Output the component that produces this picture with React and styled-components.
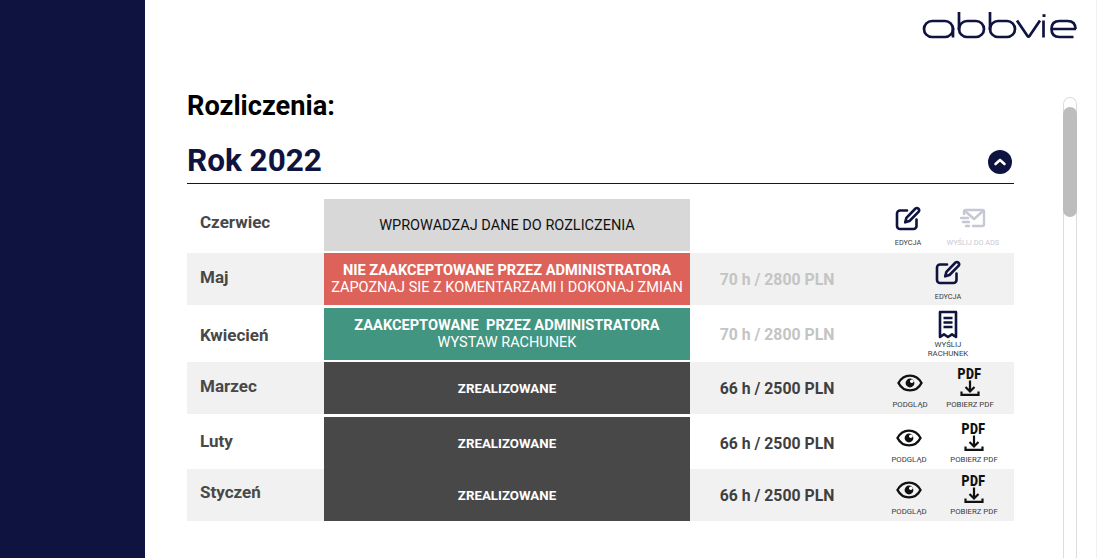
import React from 'react'
import styled, { createGlobalStyle } from 'styled-components'

const NAVY = '#0f1340'

const GlobalStyle = createGlobalStyle`
  html, body {
    margin: 0;
    height: 100%;
    background: #fff;
    font-family: Roboto, 'Liberation Sans', sans-serif;
    overflow: hidden;
  }
`

const Page = styled.div`
  display: flex;
  width: 1097px;
  height: 558px;
  overflow: hidden;
`

const Sidebar = styled.aside`
  width: 145px;
  flex: none;
  background: ${NAVY};
`

const Main = styled.main`
  flex: 1;
  display: flex;
  flex-direction: column;
  border-right: 1px solid #f1f1f1;
  min-width: 0;
`

const Header = styled.header`
  height: 97px;
  flex: none;
  display: flex;
  justify-content: flex-end;
  padding: 11px 18px 0 0;
  box-sizing: border-box;
`

const Body = styled.div`
  flex: 1;
  display: flex;
  padding-left: 42px;
  min-height: 0;
`

const Content = styled.section`
  width: 827px;
  flex: none;
`

const Title = styled.h1`
  margin: -7px 0 0;
  height: 32px;
  font-size: 27.2px;
  line-height: 32px;
  font-weight: 700;
  color: #000;
`

const YearBar = styled.div`
  display: flex;
  align-items: center;
  justify-content: space-between;
  height: 45px;
  margin-top: 12px;
  padding: 4px 2px 0 0;
  border-bottom: 1px solid ${NAVY};
`

const Year = styled.h2`
  margin: 0;
  font-size: 31.5px;
  line-height: 40px;
  font-weight: 700;
  color: ${NAVY};
`

const Collapse = styled.button`
  width: 24px;
  height: 24px;
  margin-top: 3px;
  padding: 0;
  border: 0;
  border-radius: 50%;
  background: ${NAVY};
  display: flex;
  align-items: center;
  justify-content: center;
`

const Table = styled.div`
  margin-top: 15px;
`

const Row = styled.div`
  display: grid;
  grid-template-columns: 137px 366px 174px 150px;
  height: 52px;
  margin-top: ${p => p.$gap || 0}px;
  background: ${p => (p.$shaded ? '#f1f1f1' : 'transparent')};
`

const Month = styled.div`
  padding: ${p => (p.$drop || 0) * 2}px 0 ${p => (p.$lift || 0) * 2}px 13px;
  display: flex;
  align-items: center;
  font-size: 17px;
  font-weight: 700;
  color: #484848;
`

const Status = styled.div`
  display: flex;
  flex-direction: column;
  align-items: center;
  justify-content: center;
  background: ${p => p.$bg};
  color: ${p => p.$fg || '#fff'};
  font-size: 14.5px;
  line-height: 17px;
  white-space: pre;
`

const StatusStrong = styled.strong`
  font-weight: 700;
  font-size: ${p => p.$size || 14.6}px;
`

const Amount = styled.div`
  display: flex;
  align-items: center;
  justify-content: center;
  font-size: 15.8px;
  font-weight: 700;
  color: ${p => (p.$muted ? '#c4c4c4' : '#3f3f3f')};
`

const Actions = styled.div`
  display: flex;
  justify-content: center;
  gap: ${p => p.$gap ?? 5}px;
  padding-left: ${p => p.$shift ?? 3}px;
`

const Action = styled.div`
  width: 60px;
  height: 100%;
  display: flex;
  flex-direction: column;
  align-items: center;
  justify-content: flex-end;
  padding-bottom: ${p => p.$bottom ?? 4}px;
  box-sizing: border-box;
  color: ${p => (p.$disabled ? '#c6c8d4' : '#3a3a3a')};
`

const ActionLabel = styled.span`
  font-size: ${p => p.$size || 7.8}px;
  line-height: 8.5px;
  text-align: center;
  margin-top: ${p => p.$space ?? 4}px;
  white-space: nowrap;
`

const PdfMark = styled.span`
  display: block;
  font-size: 14px;
  line-height: 12px;
  font-weight: 900;
  letter-spacing: 0.4px;
  color: #111;
  transform: scaleX(0.88);
`

const ScrollTrack = styled.div`
  position: relative;
  width: 12px;
  height: 470px;
  margin-left: 49px;
  border: 1px solid #ddd;
  border-bottom: 0;
  border-radius: 7px 7px 0 0;
  flex: none;
`

const ScrollThumb = styled.div`
  position: absolute;
  top: 9px;
  left: -1px;
  width: 14px;
  height: 110px;
  border-radius: 7px;
  background: #bdbdbd;
`

const Logo = () => (
  <svg width="156" height="30" viewBox="0 0 156 30" fill="none" stroke={NAVY} strokeWidth="2.7" role="img" aria-label="abbvie">
    <rect x="2" y="10" width="29" height="16" rx="8" />
    <path d="M31 17v9.5" />
    <rect x="37" y="10" width="25" height="16" rx="8" />
    <path d="M37 1v18" />
    <rect x="68" y="10" width="25" height="16" rx="8" />
    <path d="M68 1v18" />
    <path d="M95 9.5l10.5 15.5q1 1.4 2 0L118 9.5" />
    <path d="M121.500 9.500v17" />
    <path d="M122 3.200v2.800" strokeWidth="3" />
    <path d="M129 18h25M153.500 18q0-8-8-8h-8q-8 0-8 8t8 8h14" />
  </svg>
)

const ChevronUp = () => (
  <svg width="14" height="14" viewBox="0 0 14 14" fill="none" stroke="#fff" strokeWidth="2.6" strokeLinecap="round" strokeLinejoin="round">
    <path d="M2.500 9L7 5l4.500 4" />
  </svg>
)

const EditIcon = () => (
  <svg width="26" height="25" viewBox="0 0 26 25" fill="none" stroke={NAVY} strokeWidth="2.600" strokeLinecap="round" strokeLinejoin="round">
    <path d="M12 4.500H5a3 3 0 0 0-3 3V20a3 3 0 0 0 3 3h13.500a3 3 0 0 0 3-3v-6.500" />
    <path d="M20.500 2.500a2.300 2.300 0 0 1 3.200 3.200L14.500 15l-4.300 1.300 1.200-4.400z" />
  </svg>
)

const SendIcon = () => (
  <svg width="26" height="22" viewBox="0 0 26 22" fill="none" stroke="#c6c8d4" strokeWidth="2.400" strokeLinecap="round" strokeLinejoin="round">
    <path d="M4 6V3.500A1.500 1.500 0 0 1 5.500 2h17A1.500 1.500 0 0 1 24 3.500v13a1.500 1.500 0 0 1-1.500 1.500H13" />
    <path d="M5 3l9 8 9-8" />
    <path d="M1 10h7M3 14h6M6 18h3" />
  </svg>
)

const ReceiptIcon = () => (
  <svg width="20" height="29" viewBox="0 0 20 29" fill="none" stroke={NAVY} strokeWidth="2.600" strokeLinejoin="round">
    <path d="M2 2h16v25l-4-2.600-4 2.600-4-2.600L2 27z" />
    <path d="M5.500 8h9M5.500 12.500h9M5.500 17h9" />
  </svg>
)

const EyeIcon = () => (
  <svg width="26" height="18" viewBox="0 0 26 18" fill="none" stroke="#111" strokeWidth="2.400">
    <path d="M1.500 9C4 4.200 8 1.600 13 1.600S22 4.200 24.500 9C22 13.800 18 16.400 13 16.400S4 13.800 1.500 9z" />
    <circle cx="13" cy="9" r="4.400" fill="#111" stroke="none" />
    <circle cx="14.800" cy="7.200" r="1.800" fill="#fff" stroke="none" />
  </svg>
)

const DownloadIcon = () => (
  <svg width="20" height="17" viewBox="0 0 20 17" fill="none" stroke="#111" strokeWidth="2.200">
    <path d="M10 0.500V11M5.500 7l4.500 4.500L14.500 7" />
    <path d="M1.500 11.500v3.300h17v-3.300" />
  </svg>
)

const PreviewAction = () => (
  <Action $bottom={5}>
    <EyeIcon />
    <ActionLabel $space={9}>PODGLĄD</ActionLabel>
  </Action>
)

const PdfAction = () => (
  <Action $bottom={5}>
    <PdfMark>PDF</PdfMark>
    <DownloadIcon />
    <ActionLabel $space={4}>POBIERZ PDF</ActionLabel>
  </Action>
)

const EditAction = () => (
  <Action>
    <EditIcon />
    <ActionLabel $space={8} $size={7.3}>EDYCJA</ActionLabel>
  </Action>
)

const Done = () => (
  <Status $bg="#484848">
    <StatusStrong $size={13.300}>ZREALIZOWANE</StatusStrong>
  </Status>
)

const settled = [
  { month: 'Marzec', gap: 2, shaded: true, lift: 2, actionGap: 0, shift: 2 },
  { month: 'Luty', gap: 3, lift: 2, shift: 5 },
  { month: 'Styczeń', gap: 0, shaded: true, lift: 3, shift: 5 },
]

export default function App() {
  return (
    <Page>
      <GlobalStyle />
      <Sidebar />
      <Main>
        <Header>
          <Logo />
        </Header>
        <Body>
          <Content>
            <Title>Rozliczenia:</Title>
            <YearBar>
              <Year>Rok 2022</Year>
              <Collapse aria-label="Zwiń">
                <ChevronUp />
              </Collapse>
            </YearBar>
            <Table>
              <Row>
                <Month $lift={3}>Czerwiec</Month>
                <Status $bg="#d8d8d8" $fg="#111">WPROWADZAJ DANE DO ROZLICZENIA</Status>
                <Amount />
                <Actions>
                  <EditAction />
                  <Action $disabled>
                    <SendIcon />
                    <ActionLabel $space={9} $size={7.3}>WYŚLIJ DO ADS</ActionLabel>
                  </Action>
                </Actions>
              </Row>
              <Row $gap={2} $shaded>
                <Month $lift={2}>Maj</Month>
                <Status $bg="#dd635a">
                  <StatusStrong>NIE ZAAKCEPTOWANE PRZEZ ADMINISTRATORA</StatusStrong>
                  ZAPOZNAJ SIE Z KOMENTARZAMI I DOKONAJ ZMIAN
                </Status>
                <Amount $muted>70 h / 2800 PLN</Amount>
                <Actions $shift={18}>
                  <EditAction />
                </Actions>
              </Row>
              <Row $gap={3}>
                <Month $drop={1}>Kwiecień</Month>
                <Status $bg="#429580">
                  <StatusStrong>{'ZAAKCEPTOWANE  PRZEZ ADMINISTRATORA'}</StatusStrong>
                  WYSTAW RACHUNEK
                </Status>
                <Amount $muted>70 h / 2800 PLN</Amount>
                <Actions $shift={18}>
                  <Action $bottom={2}>
                    <ReceiptIcon />
                    <ActionLabel $space={2}>WYŚLIJ<br />RACHUNEK</ActionLabel>
                  </Action>
                </Actions>
              </Row>
              {settled.map(row => (
                <Row key={row.month} $gap={row.gap} $shaded={row.shaded}>
                  <Month $lift={row.lift}>{row.month}</Month>
                  <Done />
                  <Amount>66 h / 2500 PLN</Amount>
                  <Actions $gap={row.actionGap} $shift={row.shift}>
                    <PreviewAction />
                    <PdfAction />
                  </Actions>
                </Row>
              ))}
            </Table>
          </Content>
          <ScrollTrack>
            <ScrollThumb />
          </ScrollTrack>
        </Body>
      </Main>
    </Page>
  )
}
